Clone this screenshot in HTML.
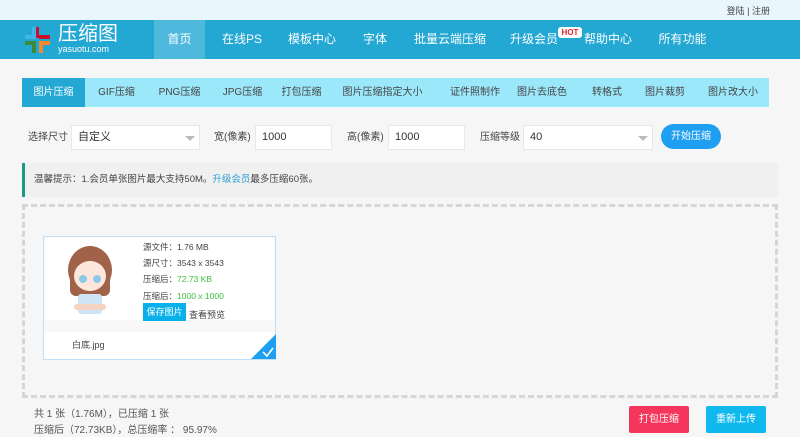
<!DOCTYPE html><html><head><meta charset="utf-8"><style>
*{margin:0;padding:0;box-sizing:border-box;white-space:nowrap}
body{width:800px;height:437px;overflow:hidden;background:#f6f6f6;font-family:"Liberation Sans","Noto Sans CJK SC",sans-serif;font-size:12px;color:#333;position:relative}
.a{position:absolute}
.top{left:0;top:0;width:800px;height:20px;background:#e9f6fd}
.hd{left:0;top:20px;width:800px;height:39px;background:#23a7d3}
.nav{color:#fff;font-size:12px;top:20px;height:39px;line-height:39px;text-align:center}
.tabs{left:22px;top:78px;width:747px;height:29px;background:#9ce8fb}
.tab{top:78px;height:29px;line-height:29px;font-size:10px;color:#444;text-align:center}
.inp{background:#fff;border:1px solid #e8e8e8;height:25px;line-height:23px;padding-left:6px;font-size:11px;top:125px}
.lab{top:125px;line-height:25px;font-size:10px;color:#444}
.arr{width:0;height:0;border-left:5px solid transparent;border-right:5px solid transparent;border-top:5px solid #bbb}
.ci{font-size:8.5px;color:#444;left:143px}
</style></head><body>
<div class="a top"></div>
<div class="a" style="right:30px;top:4px;font-size:9px;color:#444">登陆 | 注册</div>
<div class="a hd"></div>
<div class="a" style="left:154px;top:20px;width:51px;height:39px;background:#4fb9dd"></div>
<svg class="a" style="left:24px;top:26px" width="28" height="28" viewBox="0 0 28 28">
<rect x="11" y="1" width="4" height="11" fill="#c8102e"/><rect x="15" y="9" width="11" height="4" fill="#c8102e"/>
<rect x="1" y="9" width="11" height="4" fill="#3db6ea"/><rect x="8" y="1" width="4" height="11" fill="#3db6ea"/>
<rect x="1" y="15" width="11" height="4" fill="#3a8a3a"/><rect x="8" y="15" width="4" height="12" fill="#3a8a3a"/>
<rect x="15" y="15" width="4" height="12" fill="#f5892b"/><rect x="15" y="15" width="11" height="4" fill="#f5892b"/></svg>
<div class="a" style="left:58px;top:22px;color:#fff;font-size:20px;line-height:24px">压缩图</div>
<div class="a" style="left:58px;top:44px;color:#fff;font-size:9px">yasuotu.com</div>
<div class="a nav" style="left:154px;width:51px">首页</div>
<div class="a nav" style="left:213px;width:58px">在线PS</div>
<div class="a nav" style="left:283px;width:58px">模板中心</div>
<div class="a nav" style="left:355px;width:40px">字体</div>
<div class="a nav" style="left:410px;width:80px">批量云端压缩</div>
<div class="a nav" style="left:507px;width:54px">升级会员</div>
<div class="a" style="left:558px;top:27px;width:24px;height:11px;background:#fff;border-radius:3px;color:#e3262f;font-size:8px;font-weight:bold;text-align:center;line-height:11px">HOT</div>
<div class="a nav" style="left:583px;width:50px">帮助中心</div>
<div class="a nav" style="left:655px;width:55px">所有功能</div>
<div class="a tabs"></div>
<div class="a" style="left:22px;top:78px;width:63px;height:29px;background:#23a7d3"></div>
<div class="a tab" style="left:22px;width:63px;color:#fff">图片压缩</div>
<div class="a tab" style="left:85px;width:63px">GIF压缩</div>
<div class="a tab" style="left:148px;width:63px">PNG压缩</div>
<div class="a tab" style="left:211px;width:63px">JPG压缩</div>
<div class="a tab" style="left:270px;width:63px">打包压缩</div>
<div class="a tab" style="left:340px;width:85px">图片压缩指定大小</div>
<div class="a tab" style="left:440px;width:70px">证件照制作</div>
<div class="a tab" style="left:512px;width:60px">图片去底色</div>
<div class="a tab" style="left:582px;width:50px">转格式</div>
<div class="a tab" style="left:640px;width:50px">图片裁剪</div>
<div class="a tab" style="left:703px;width:60px">图片改大小</div>
<div class="a lab" style="left:28px">选择尺寸</div>
<div class="a inp" style="left:71px;width:129px">自定义</div><div class="a arr" style="left:185px;top:136px"></div>
<div class="a lab" style="left:214px">宽(像素)</div>
<div class="a inp" style="left:255px;width:77px">1000</div>
<div class="a lab" style="left:347px">高(像素)</div>
<div class="a inp" style="left:388px;width:77px">1000</div>
<div class="a lab" style="left:480px">压缩等级</div>
<div class="a inp" style="left:523px;width:130px">40</div><div class="a arr" style="left:638px;top:136px"></div>
<div class="a" style="left:661px;top:124px;width:60px;height:25px;border-radius:13px;background:#1e9ff2;color:#fff;font-size:10px;text-align:center;line-height:25px">开始压缩</div>
<div class="a" style="left:22px;top:163px;width:756px;height:34px;background:#f0f0f0;border-left:3px solid #1a9a83"></div>
<div class="a" style="left:34px;top:163px;line-height:34px;font-size:9.5px;color:#444">温馨提示：1.会员单张图片最大支持50M。<span style="color:#2a9fd6">升级会员</span>最多压缩60张。</div>
<div class="a" style="left:22px;top:204px;width:756px;height:194px;border:3px dashed #d6d6d6"></div>
<div class="a" style="left:43px;top:236px;width:233px;height:124px;border:1px solid #bfe0f7;background:#f8f8f8"></div>
<div class="a" style="left:45px;top:238px;width:229px;height:82px;background:#fff"></div>
<div class="a" style="left:44px;top:332px;width:231px;height:27px;background:#fff"></div>
<svg class="a" style="left:62px;top:240px" width="60" height="80" viewBox="0 0 60 80">
<ellipse cx="28" cy="30" rx="22" ry="24" fill="#a0634a"/><rect x="8" y="30" width="40" height="26" fill="#a0634a" rx="6"/>
<ellipse cx="28" cy="36" rx="16" ry="15" fill="#fde6dc"/><circle cx="21" cy="39" r="4" fill="#8cc9e6"/><circle cx="35" cy="39" r="4" fill="#8cc9e6"/>
<rect x="16" y="54" width="24" height="20" fill="#cfe4f7" rx="3"/><rect x="12" y="64" width="32" height="6" fill="#f5d3c3" rx="3"/></svg>
<div class="a ci" style="top:241px">源文件：1.76 MB</div>
<div class="a ci" style="top:257px">源尺寸：3543 x 3543</div>
<div class="a ci" style="top:273px">压缩后：<span style="color:#3bbf3b">72.73 KB</span></div>
<div class="a ci" style="top:290px">压缩后：<span style="color:#3bbf3b">1000 x 1000</span></div>
<div class="a" style="left:143px;top:303px;width:43px;height:18px;background:#0ab0ea;color:#fff;font-size:9px;text-align:center;line-height:18px">保存图片</div>
<div class="a" style="left:189px;top:308px;font-size:9px;color:#444">查看预览</div>
<div class="a" style="left:72px;top:338px;font-size:9px;color:#444">白底.jpg</div>
<svg class="a" style="left:251px;top:334px" width="25" height="25"><polygon points="25,0 25,25 0,25" fill="#1e9ff2"/><path d="M12 18l4 4 6-8" stroke="#fff" stroke-width="1.6" fill="none"/></svg>
<div class="a" style="left:34px;top:405px;font-size:10px;color:#555">共 1 张（1.76M），已压缩 1 张</div>
<div class="a" style="left:34px;top:421px;font-size:10px;color:#555">压缩后（72.73KB），总压缩率 ： 95.97%</div>
<div class="a" style="left:629px;top:406px;width:60px;height:27px;background:#f5365c;color:#fff;font-size:10px;text-align:center;line-height:27px;border-radius:2px">打包压缩</div>
<div class="a" style="left:706px;top:406px;width:60px;height:27px;background:#0fb9ee;color:#fff;font-size:10px;text-align:center;line-height:27px;border-radius:2px">重新上传</div>
</body></html>
